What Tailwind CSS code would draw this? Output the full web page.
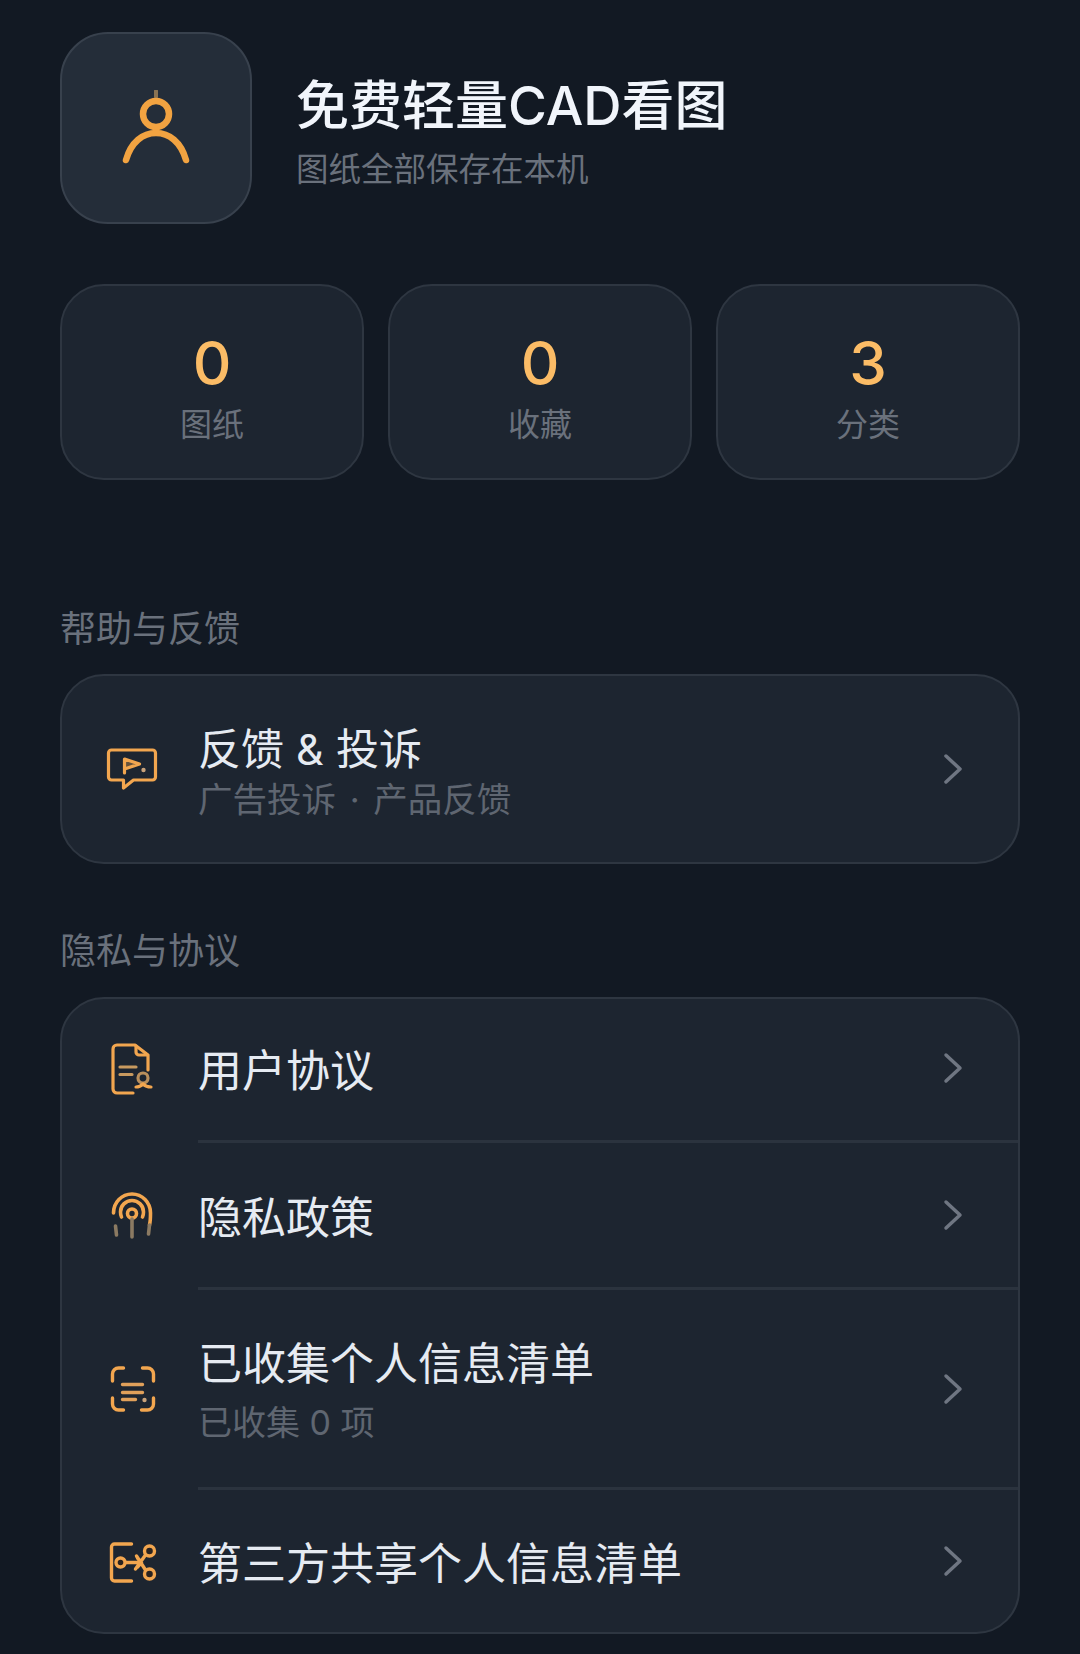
<!DOCTYPE html>
<html lang="zh-CN">
<head>
  <meta charset="UTF-8" />
  <title>我的</title>
  <script src="https://cdn.jsdelivr.net/npm/@tailwindcss/browser@4"></script>
</head>
<body class="bg-[#121923] font-['Inter','Noto_Sans_CJK_SC',sans-serif] w-[1080px] h-[1654px] overflow-hidden">
  <div class="px-[60px] pt-[32px]">

    <!-- header -->
    <div class="flex items-center h-[192px]">
      <div class="w-[192px] h-[192px] rounded-[48px] bg-[#242d39] border-2 border-[#38414d] flex items-center justify-center shrink-0">
        <svg width="70" height="76" viewBox="0 0 70 76" fill="none" stroke="#f2a341" stroke-width="6.500" stroke-linecap="round">
          <path d="M35 1v6" stroke="#8b7352" stroke-width="4" />
          <circle cx="35" cy="24" r="13" />
          <path d="M5 70C10 52 22 43 35 43s25 9 30 27" />
        </svg>
      </div>
      <div class="ml-[44px] mt-[12px]">
        <div class="text-[53px] leading-[60px] font-medium text-[#f1f5fb]">免费轻量CAD看图</div>
        <div class="text-[32.500px] leading-[44px] mt-[12px] text-[#6a717c]">图纸全部保存在本机</div>
      </div>
    </div>

    <!-- stats -->
    <div class="grid grid-cols-3 gap-[24px] mt-[60px]">
      <div class="h-[196px] rounded-[44px] bg-[#1d2530] border-2 border-[#2e3641] flex flex-col items-center pt-[44px]">
        <div class="text-[60px] leading-[66px] font-medium text-[#fbbc66]">0</div>
        <div class="text-[32px] leading-[40px] mt-[9px] text-[#6a717c]">图纸</div>
      </div>
      <div class="h-[196px] rounded-[44px] bg-[#1d2530] border-2 border-[#2e3641] flex flex-col items-center pt-[44px]">
        <div class="text-[60px] leading-[66px] font-medium text-[#fbbc66]">0</div>
        <div class="text-[32px] leading-[40px] mt-[9px] text-[#6a717c]">收藏</div>
      </div>
      <div class="h-[196px] rounded-[44px] bg-[#1d2530] border-2 border-[#2e3641] flex flex-col items-center pt-[44px]">
        <div class="text-[60px] leading-[66px] font-medium text-[#fbbc66]">3</div>
        <div class="text-[32px] leading-[40px] mt-[9px] text-[#6a717c]">分类</div>
      </div>
    </div>

    <!-- help -->
    <div class="text-[36px] leading-[44px] text-[#6a717c] mt-[127px]">帮助与反馈</div>
    <div class="h-[190px] mt-[23px] rounded-[44px] bg-[#1d2530] border-2 border-[#2e3641] flex items-center pl-[40px] pr-[55px]">
      <svg class="shrink-0 mr-[36px]" width="60" height="60" viewBox="11.5 19 60 60" fill="none" stroke="#f2a64f" stroke-width="3.200" stroke-linecap="round" stroke-linejoin="round">
        <path d="M21 30h41a3 3 0 0 1 3 3v24a3 3 0 0 1-3 3H43l-10 8v-8H21a3 3 0 0 1-3-3V33a3 3 0 0 1 3-3z" />
        <path d="M34 53V39l15 5-15 5" fill="#f2a64f" fill-opacity="0.350" />
        <circle cx="53" cy="50" r="2.200" fill="#c9a27a" stroke="none" />
      </svg>
      <div class="flex-1 mt-[6px]">
        <div class="text-[43px] leading-[54px] text-[#e6ebf2]">反馈 &amp; 投诉</div>
        <div class="text-[34.500px] leading-[44px] [word-spacing:4px] text-[#5f6671] mt-[2px]">广告投诉 · 产品反馈</div>
      </div>
      <svg width="20" height="32" viewBox="0 0 20 32" fill="none" stroke="#6f7682" stroke-width="3.500" stroke-linecap="round" stroke-linejoin="round"><path d="M3 3l14 13L3 29" /></svg>
    </div>

    <!-- privacy -->
    <div class="text-[36px] leading-[44px] text-[#6a717c] mt-[65px]">隐私与协议</div>
    <div class="mt-[24px] rounded-[44px] bg-[#1d2530] border-2 border-[#2e3641] overflow-hidden">

      <div class="h-[141px] flex items-center pl-[40px] pr-[55px]">
        <svg class="shrink-0 mr-[36px]" width="60" height="60" viewBox="12 19 60 60" fill="none" stroke="#f2a64f" stroke-width="3.200" stroke-linecap="round" stroke-linejoin="round">
          <path d="M43 72H27a4 4 0 0 1-4-4V28a4 4 0 0 1 4-4h18l13 10v15" />
          <path d="M46 25v6a3 3 0 0 0 3 3h8" />
          <path d="M30 46h16M30 53.500h12" stroke="#c89a5f" />
          <circle cx="53" cy="57" r="5" stroke="#b98f5c" />
          <path d="M46 66c3 0 5-1 7-3 2 2 4 3 8 3" />
        </svg>
        <div class="flex-1 mt-[2px] text-[44px] leading-[54px] text-[#e6ebf2]">用户协议</div>
        <svg class="-mt-[3px]" width="20" height="32" viewBox="0 0 20 32" fill="none" stroke="#6f7682" stroke-width="3.500" stroke-linecap="round" stroke-linejoin="round"><path d="M3 3l14 13L3 29" /></svg>
      </div>

      <div class="h-[3px] ml-[136px] bg-[#2b333e]"></div>

      <div class="h-[144px] flex items-center pl-[40px] pr-[55px]">
        <svg class="shrink-0 mr-[36px]" width="60" height="60" viewBox="11.5 5 60 60" fill="none" stroke="#f2a64f" stroke-width="3.600" stroke-linecap="round">
          <path d="M23 33a18.500 19 0 0 1 37 0c0 4 0 8-1 12" />
          <path d="M31 37c-1-2-1-3-1-5a11.500 11.500 0 0 1 23 0c0 2 0 3-1 5" />
          <circle cx="41.500" cy="33.500" r="4.500" />
          <path d="M41.500 39v18M25 46l1 9M59 45l-1 9" stroke="#8b7a62" />
        </svg>
        <div class="flex-1 mt-[6px] text-[44px] leading-[54px] text-[#e6ebf2]">隐私政策</div>
        <svg width="20" height="32" viewBox="0 0 20 32" fill="none" stroke="#6f7682" stroke-width="3.500" stroke-linecap="round" stroke-linejoin="round"><path d="M3 3l14 13L3 29" /></svg>
      </div>

      <div class="h-[3px] ml-[136px] bg-[#2b333e]"></div>

      <div class="h-[197px] flex items-center pl-[40px] pr-[55px]">
        <svg class="shrink-0 mr-[36px]" width="60" height="60" viewBox="11.5 8 60 60" fill="none" stroke="#f2a64f" stroke-width="3.400" stroke-linecap="round">
          <path d="M22 30v-7a6 6 0 0 1 6-6h5M52 17h5a6 6 0 0 1 6 6v7M22 47v6a6 6 0 0 0 6 6h5M63 47v6a6 6 0 0 1-6 6h-6" />
          <path d="M32 33.500h20M32 41.500h20M32 48.500h13" stroke="#e0a05a" />
          <circle cx="54" cy="49" r="2.200" fill="#c9a27a" stroke="none" />
        </svg>
        <div class="flex-1 mt-[4px]">
          <div class="text-[44px] leading-[54px] text-[#e6ebf2]">已收集个人信息清单</div>
          <div class="text-[34px] leading-[44px] text-[#5f6671] mt-[10px]">已收集 0 项</div>
        </div>
        <svg width="20" height="32" viewBox="0 0 20 32" fill="none" stroke="#6f7682" stroke-width="3.500" stroke-linecap="round" stroke-linejoin="round"><path d="M3 3l14 13L3 29" /></svg>
      </div>

      <div class="h-[3px] ml-[136px] bg-[#2b333e]"></div>

      <div class="h-[142px] flex items-center pl-[40px] pr-[55px]">
        <svg class="shrink-0 mr-[36px]" width="60" height="60" viewBox="11.5 5 60 60" fill="none" stroke="#f2a64f" stroke-width="3.400" stroke-linecap="round" stroke-linejoin="round">
          <path d="M41 18H24a3 3 0 0 0-3 3v31a3 3 0 0 0 3 3h17" />
          <path d="M35 36.500h16M47 32l4 4.500-4 4.500M55 29L45 43M55 44L46 30" />
          <circle cx="30" cy="36.500" r="4.500" fill="#2a2320" />
          <circle cx="59" cy="25" r="5" fill="#2a2320" />
          <circle cx="59" cy="48" r="5" fill="#2a2320" />
        </svg>
        <div class="flex-1 mt-[5px] text-[44px] leading-[54px] text-[#e6ebf2]">第三方共享个人信息清单</div>
        <svg width="20" height="32" viewBox="0 0 20 32" fill="none" stroke="#6f7682" stroke-width="3.500" stroke-linecap="round" stroke-linejoin="round"><path d="M3 3l14 13L3 29" /></svg>
      </div>
    </div>
  </div>
</body>
</html>
